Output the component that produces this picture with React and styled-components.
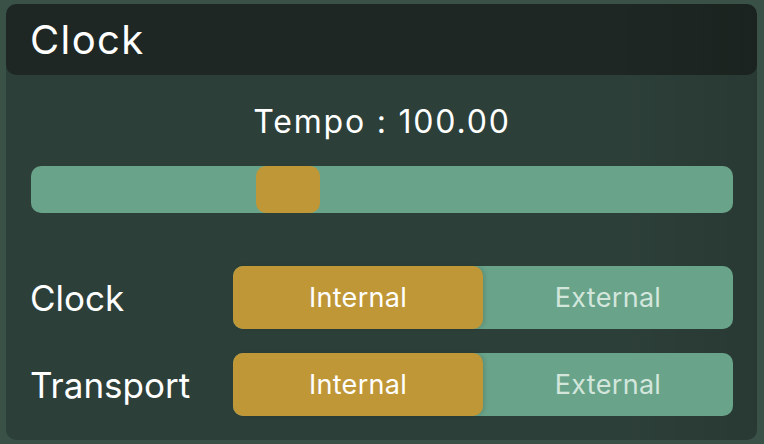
import React, { useState } from "react";
import styled, { createGlobalStyle } from "styled-components";

const GlobalStyle = createGlobalStyle`
  html, body {
    margin: 0;
    padding: 0;
    background: #3a5148;
    font-family: Inter, "Noto Sans", sans-serif;
  }
`;

const MODES = ["Internal", "External"];

const App = () => {
  const [tempo] = useState(100);
  const [clock, setClock] = useState("Internal");
  const [transport, setTransport] = useState("Internal");

  return (
    <>
      <GlobalStyle />
      <Page>
        <Panel>
          <Header>
            <Title>Clock</Title>
          </Header>
          <Body>
            <TempoLabel>Tempo : {tempo.toFixed(2)}</TempoLabel>
            <Track>
              <Thumb style={{ left: "32%" }} />
            </Track>
            <Rows>
              <Row>
                <RowLabel>Clock</RowLabel>
                <Segmented value={clock} onChange={setClock} />
              </Row>
              <Row>
                <RowLabel>Transport</RowLabel>
                <Segmented value={transport} onChange={setTransport} />
              </Row>
            </Rows>
          </Body>
        </Panel>
      </Page>
    </>
  );
};

const Segmented = ({ value, onChange }) => (
  <SegmentGroup>
    {MODES.map(mode => (
      <Segment
        key={mode}
        $active={value === mode}
        onClick={() => onChange(mode)}
      >
        {mode}
      </Segment>
    ))}
  </SegmentGroup>
);

export default App;

const Page = styled.div`
  width: 764px;
  height: 444px;
  padding: 4px 7px 4px 6px;
  box-sizing: border-box;
`;

const Panel = styled.div`
  height: 100%;
  display: flex;
  flex-direction: column;
  border-radius: 10px;
  background: linear-gradient(
      to right,
      rgba(0, 0, 0, 0) 82%,
      rgba(0, 0, 0, 0.1) 100%
    ),
    #2d3f39;
  overflow: hidden;
`;

const Header = styled.div`
  height: 71px;
  flex-shrink: 0;
  display: flex;
  align-items: center;
  padding-left: 24px;
  border-radius: 10px;
  background: linear-gradient(
      to right,
      rgba(0, 0, 0, 0) 80%,
      rgba(0, 0, 0, 0.1) 100%
    ),
    #1e2723;
`;

const Title = styled.span`
  color: #ffffff;
  font-size: 40px;
  font-weight: 400;
  letter-spacing: 1.4px;
`;

const Body = styled.div`
  flex: 1;
  display: flex;
  flex-direction: column;
  padding: 0 24px 0 25px;
`;

const TempoLabel = styled.div`
  margin-top: 29px;
  height: 36px;
  line-height: 36px;
  text-align: center;
  color: #ffffff;
  font-size: 32px;
  letter-spacing: 1.8px;
`;

const Track = styled.div`
  position: relative;
  margin-top: 26px;
  height: 47px;
  border-radius: 10px;
  background: #69a389;
`;

const Thumb = styled.div`
  position: absolute;
  top: 0;
  width: 64px;
  height: 100%;
  border-radius: 10px;
  background: #c09736;
`;

const Rows = styled.div`
  margin-top: 53px;
  display: flex;
  flex-direction: column;
  gap: 24px;
`;

const Row = styled.div`
  display: flex;
  align-items: center;
`;

const RowLabel = styled.div`
  width: 202px;
  margin-left: -1px;
  color: #ffffff;
  font-size: 35px;
`;

const SegmentGroup = styled.div`
  flex: 1;
  height: 63px;
  margin-left: 1px;
  display: flex;
  border-radius: 10px;
  background: #69a389;
`;

const Segment = styled.button`
  flex: 1;
  border: none;
  margin: 0;
  padding: 0;
  border-radius: 10px;
  font-family: inherit;
  font-size: 27px;
  letter-spacing: 0.3px;
  cursor: pointer;
  color: ${p => (p.$active ? "#ffffff" : "#d3e6dc")};
  background: ${p => (p.$active ? "#c09736" : "transparent")};
  box-shadow: ${p => (p.$active ? "2px 0 4px rgba(0, 0, 0, 0.12)" : "none")};
`;
